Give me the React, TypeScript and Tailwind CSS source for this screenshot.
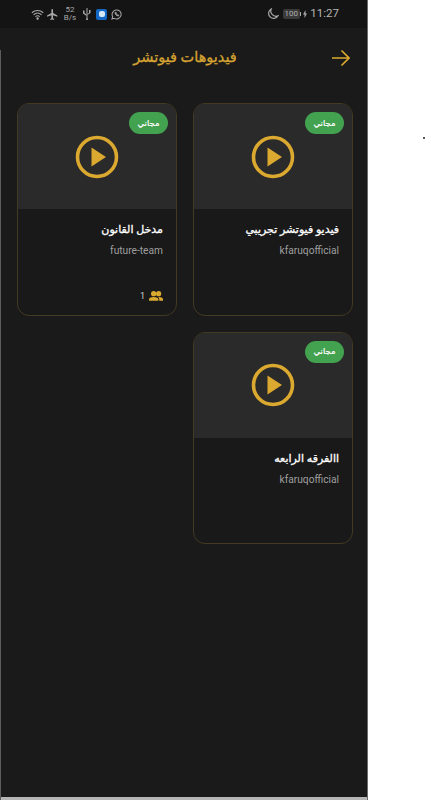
import React from 'react';

const baseFont = "font-['Roboto','DejaVu_Sans',sans-serif]";

interface VideoCardProps {
    title: string;
    author: string;
    members?: number;
}

const PlayIcon = () => (
    <svg width="44" height="44" viewBox="0 0 44 44" fill="none">
        <circle cx="22" cy="22" r="19.5" stroke="#dba92f" strokeWidth="3.6" />
        <path d="M16.5 12.5 L31 22 L16.5 31.5 Z" fill="#dba92f" />
    </svg>
);

const GroupIcon = () => (
    <svg width="14" height="14" viewBox="0 0 24 24" fill="#dba92f">
        <circle cx="8" cy="8" r="4.5" />
        <circle cx="16.5" cy="8" r="4.5" />
        <path d="M0 20v-2.500C0 14.800 4.500 13.500 8 13.500s8 1.300 8 4V20H0z" />
        <path d="M17.500 20v-2.500c0-1.500-.7-2.800-1.900-3.800.5-.1 1-.2 1.400-.2 3.500 0 7 1.300 7 4V20h-6.500z" />
    </svg>
);

const VideoCard: React.FC<VideoCardProps> = ({ title, author, members }) => (
    <div className="relative h-[212.5px] overflow-hidden rounded-[12px] border border-[#443a24] bg-[#191919]">
        <div className="flex h-[105px] items-center justify-center bg-[#2a2a2a]">
            <PlayIcon />
        </div>
        <span className="absolute right-[8px] top-[8px] flex h-[22px] w-[39px] items-center justify-center rounded-full bg-[#43a24f] text-[8.5px] text-white [-webkit-text-stroke:0.2px_white]">
            مجاني
        </span>
        <div className="flex flex-col items-start px-[13px] pt-[14px]">
            <p className="text-[11px] leading-[14px] text-white [-webkit-text-stroke:0.3px_white]">{title}</p>
            <p dir="ltr" className="mt-[7px] text-[10.2px] leading-[14px] text-[#9f9f9f]">{author}</p>
        </div>
        {members !== undefined && (
            <div className="absolute bottom-[12px] right-[13px] flex items-center gap-[4px]">
                <GroupIcon />
                <span className="text-[9px] leading-[14px] text-[#cfcfcf]">{members}</span>
            </div>
        )}
    </div>
);

const StatusBar = () => (
    <div className="flex h-[28px] items-center justify-between bg-[#141414] pl-[31px] pr-[28px] text-[#a8a8a8]">
        <div className="flex items-center">
            <svg width="14" height="13" viewBox="0 0 16 13" fill="none" stroke="#a8a8a8" strokeWidth="1.2">
                <path d="M1 4.500C4.800 1 10.200 1 14 4.500" />
                <path d="M3 6.800C5.700 4.400 9.300 4.400 12 6.800" />
                <path d="M5 9C6.600 7.700 8.400 7.700 10 9" />
                <circle cx="7.500" cy="11" r=".8" fill="#a8a8a8" />
            </svg>
            <svg className="ml-[1px]" width="13" height="13" viewBox="0 0 24 24" fill="#a8a8a8">
                <path d="M21 16v-2l-8-5V3.500a1.500 1.500 0 0 0-3 0V9l-8 5v2l8-2.500V19l-2 1.500V22l3.500-1 3.500 1v-1.500L13 19v-5.500z" />
            </svg>
            <div className="ml-[5px] flex w-[12px] flex-col items-center text-[8px] leading-[8px]">
                <span>52</span>
                <span>B/s</span>
            </div>
            <svg className="ml-[7px]" width="8" height="12" viewBox="0 0 8 12" fill="#a8a8a8">
                <path d="M3.500 0h1v9.500l.5 2.500H3l.5-2.500z" />
                <path d="M0 2.500h1.500V5l2 1.500V8L0 5.500zM6 2h1.500v3L4.500 7V6l1.500-1z" />
            </svg>
            <div className="ml-[5px] flex h-[11px] w-[11px] items-center justify-center rounded-[2px] bg-[#1268c4]">
                <div className="h-[6px] w-[6px] rounded-[2px] bg-[#d5e6f7]" />
            </div>
            <svg className="ml-[4px]" width="11" height="11" viewBox="0 0 12 12" fill="none" stroke="#a8a8a8" strokeWidth="1.1">
                <path d="M1 11l.8-2.800A4.900 4.900 0 1 1 3.800 10.200z" />
                <path d="M4.200 3.800c0 2 1.800 3.800 3.800 4l.7-1-1.200-.7-.5.4c-.6-.3-1-.8-1.300-1.300l.4-.5-.6-1.200z" strokeWidth=".6" fill="#a8a8a8" />
            </svg>
        </div>
        <div className="flex items-center">
            <svg width="12" height="12" viewBox="0 0 12 12" fill="none" stroke="#a8a8a8" strokeWidth="1.2">
                <path d="M4.200 1A5 5 0 1 0 11 7.800 5.200 5.200 0 0 1 4.200 1z" />
            </svg>
            <div className="ml-[4px] flex h-[10px] w-[17px] items-center justify-center rounded-[2px] bg-[#3a3a3a] text-[8px] leading-none text-[#b0b0b0]">
                100
            </div>
            <div className="h-[4px] w-[1.5px] bg-[#a8a8a8]" />
            <svg className="ml-[2px]" width="4" height="8" viewBox="0 0 4 8" fill="#a8a8a8">
                <path d="M2.500 0L0 4.500h1.500L1.500 8 4 3.500H2.500z" />
            </svg>
            <span className="ml-[3px] text-[11.5px] leading-none text-[#b5b5b5]">11:27</span>
        </div>
    </div>
);

const App: React.FC = () => {
    return (
        <div className={`flex h-[800px] w-[426px] items-start bg-white ${baseFont}`}>
            <div className="relative flex h-[800px] w-[368px] flex-col border-r border-[#6b6b6b] bg-[#1a1a1a]">
                <StatusBar />
                <div className="flex h-[59px] items-center justify-between pl-[28px] pr-[17px]">
                    <span className="w-[10px]" />
                    <h1 dir="rtl" className="text-[14.5px] text-[#d7a533] [-webkit-text-stroke:0.3px_#d7a533]">فيديوهات فيوتشر</h1>
                    <svg width="18" height="18" viewBox="0 0 18 18" fill="none" stroke="#dba92f" strokeWidth="1.6">
                        <path d="M0 9h17M9.500 1.500L17 9l-7.500 7.500" />
                    </svg>
                </div>
                <div dir="rtl" className="grid flex-1 grid-cols-[160px_160px] content-start gap-[16px] pl-[17px] pr-[14px] pt-[16px]">
                    <VideoCard title="فيديو فيوتشر تجريبي" author="kfaruqofficial" />
                    <VideoCard title="مدخل القانون" author="future-team" members={1} />
                    <VideoCard title="االفرقه الرابعه" author="kfaruqofficial" />
                </div>
                <div className="h-[3px] bg-[#b5b5b5]" />
                <div className="absolute bottom-0 left-0 top-[50px] w-[1px] bg-[#5c5c5c]" />
            </div>
            <div className="ml-[55px] mt-[137px] h-[2px] w-[2px] rounded-full bg-[#222222]" />
        </div>
    );
};

export default App;
